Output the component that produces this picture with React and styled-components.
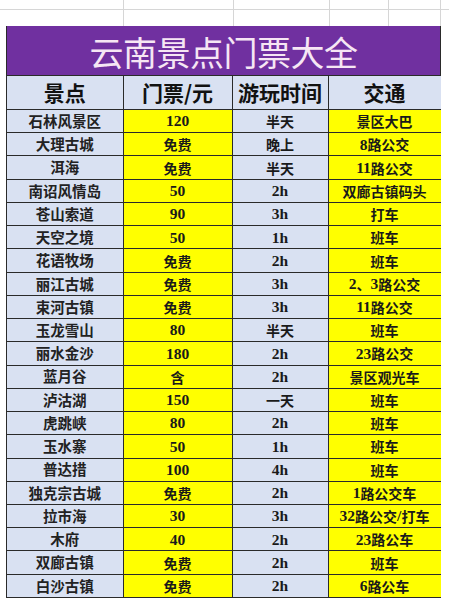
import React from "react";
import styled, { createGlobalStyle } from "styled-components";

const Global = createGlobalStyle`
  html, body { margin: 0; padding: 0; background: #ffffff; }
  body { width: 449px; height: 600px; overflow: hidden; font-family: "Noto Sans CJK SC", sans-serif; }
  * { box-sizing: border-box; }
`;

const Page = styled.div`
  width: 449px;
  height: 600px;
  background: #ffffff;
  display: flex;
  flex-direction: column;
`;

const SheetStrip = styled.div`
  display: grid;
  grid-template-columns: 124px 110px 96px 59px 52px 8px;
  grid-template-rows: 10px 16px;
  height: 26px;
`;

const SheetCell = styled.div`
  border-right: 1px solid #d6d6d6;
  border-bottom: ${(p) => (p.$top ? "1px solid #d6d6d6" : "none")};
  &:nth-child(6n) { border-right: none; }
`;

const Table = styled.div`
  margin-left: 6px;
  width: 435px;
  display: flex;
  flex-direction: column;
  border-left: 1.5px solid #2a2a2a;
  border-right: 1.5px solid #2a2a2a;
  border-bottom: 1.5px solid #2a2a2a;
`;

const Title = styled.div`
  height: 49px;
  background: #7030a0;
  color: #f6e6f4;
  font-family: "Noto Sans CJK SC", sans-serif;
  font-size: 34px;
  font-weight: 400;
  display: flex;
  align-items: center;
  justify-content: center;
  letter-spacing: -0.5px;
  padding-top: 1px;
`;

const Row = styled.div`
  display: grid;
  grid-template-columns: 116.5px 109px 96px 112px;
  height: ${(p) => (p.$head ? "34px" : "23.24px")};
  border-top: 1.5px solid #2a2a2a;
`;

const Cell = styled.div`
  display: flex;
  align-items: center;
  justify-content: center;
  background: ${(p) => (p.$yellow ? "#ffff00" : "#d9e1f2")};
  border-right: ${(p) => (p.$last ? "none" : "1.5px solid #2a2a2a")};
  color: #1c1c1c;
  font-weight: 700;
  white-space: nowrap;
  overflow: hidden;
  line-height: 1;
`;

const HeadCell = styled(Cell)`
  font-family: "Noto Sans CJK SC", sans-serif;
  font-size: 21px;
  color: #111111;
`;

const NameCell = styled(Cell)`
  font-family: "Noto Sans CJK SC", sans-serif;
  font-size: 14.5px;
  color: #222222;
`;

const ValueCell = styled(Cell)`
  font-family: "Noto Sans CJK SC", sans-serif;
  font-size: 14px;
  color: #1a1a1a;
`;

const Latin = styled.span`
  font-family: "Liberation Serif", serif;
  font-size: 15.5px;
  font-weight: 700;
`;

const rows = [
  ["石林风景区", "120", "半天", "景区大巴"],
  ["大理古城", "免费", "晚上", "8路公交"],
  ["洱海", "免费", "半天", "11路公交"],
  ["南诏风情岛", "50", "2h", "双廊古镇码头"],
  ["苍山索道", "90", "3h", "打车"],
  ["天空之境", "50", "1h", "班车"],
  ["花语牧场", "免费", "2h", "班车"],
  ["丽江古城", "免费", "3h", "2、3路公交"],
  ["束河古镇", "免费", "3h", "11路公交"],
  ["玉龙雪山", "80", "半天", "班车"],
  ["丽水金沙", "180", "2h", "23路公交"],
  ["蓝月谷", "含", "2h", "景区观光车"],
  ["泸沽湖", "150", "一天", "班车"],
  ["虎跳峡", "80", "2h", "班车"],
  ["玉水寨", "50", "1h", "班车"],
  ["普达措", "100", "4h", "班车"],
  ["独克宗古城", "免费", "2h", "1路公交车"],
  ["拉市海", "30", "3h", "32路公交/打车"],
  ["木府", "40", "2h", "23路公车"],
  ["双廊古镇", "免费", "2h", "班车"],
  ["白沙古镇", "免费", "2h", "6路公车"],
];

function Mixed({ text }) {
  const parts = text.match(/[0-9A-Za-z/]+|[^0-9A-Za-z/]+/g) || [];
  return parts.map((p, i) =>
    /^[0-9A-Za-z/]+$/.test(p) ? <Latin key={i}>{p}</Latin> : <span key={i}>{p}</span>
  );
}

export default function App() {
  return (
    <Page>
      <Global />
      <SheetStrip>
        {Array.from({ length: 12 }).map((_, i) => (
          <SheetCell key={i} $top={i < 6} />
        ))}
      </SheetStrip>
      <Table>
        <Title>云南景点门票大全</Title>
        <Row $head>
          <HeadCell>景点</HeadCell>
          <HeadCell>门票/元</HeadCell>
          <HeadCell>游玩时间</HeadCell>
          <HeadCell $last>交通</HeadCell>
        </Row>
        {rows.map((r) => (
          <Row key={r[0]}>
            <NameCell>{r[0]}</NameCell>
            <ValueCell $yellow><Mixed text={r[1]} /></ValueCell>
            <ValueCell><Mixed text={r[2]} /></ValueCell>
            <ValueCell $yellow $last><Mixed text={r[3]} /></ValueCell>
          </Row>
        ))}
      </Table>
    </Page>
  );
}
